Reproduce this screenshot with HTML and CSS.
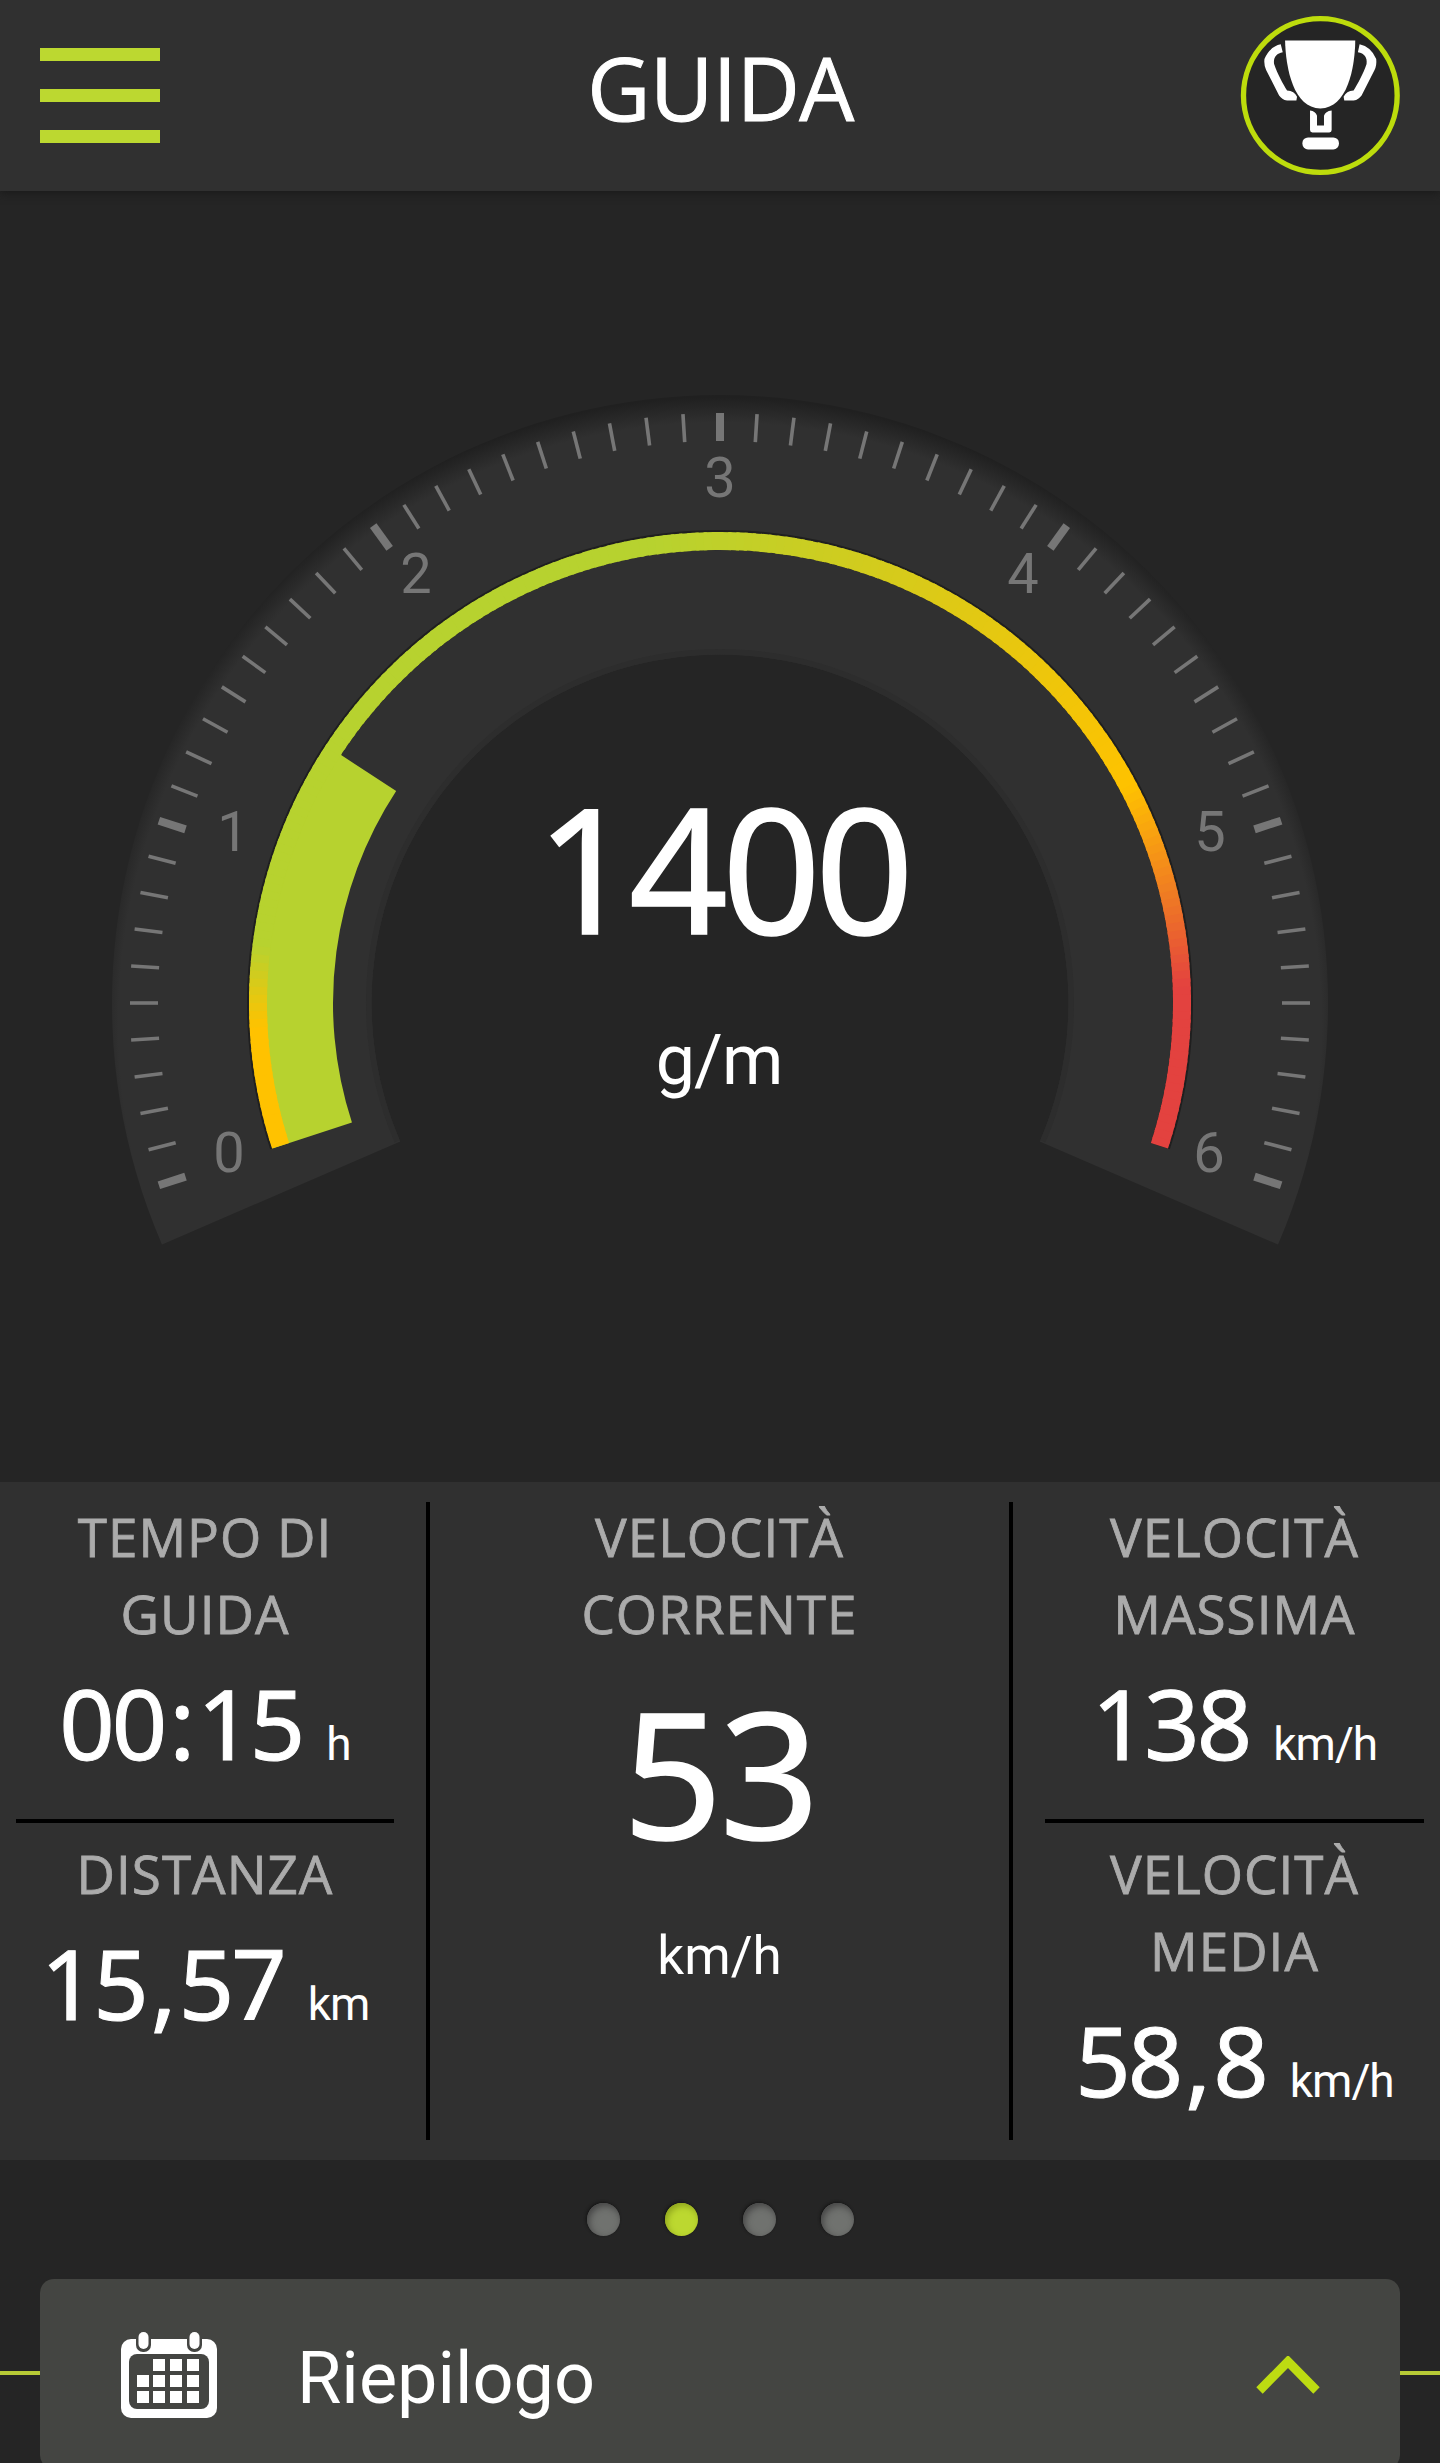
FILE: index.html
```html
<!DOCTYPE html>
<html lang="it">
<head>
  <meta charset="UTF-8" />
  <title>Guida</title>
  <link rel="stylesheet" href="styles.css">
</head>
<body>

  <header class="topbar">
    <div class="menu">
      <span></span>
      <span></span>
      <span></span>
    </div>
    <h1>GUIDA</h1>
    <svg class="trophy" viewBox="114 40 486 490">
      <circle cx="358" cy="285" r="231" fill="#252525" stroke="#bddc0c" stroke-width="16" />
      <path d="M252 120H463C462 205 438 324 358 324S254 205 252 120Z" fill="#fff" />
      <path d="M239 131L245 155C226 158 216 171 219 190C229 220 246 250 258 270Q280 271 288 289L286 300H258C247 299 240 293 234 285L195 208Q188 194 190 175Q206 138 239 131Z" fill="#fff" />
      <path d="M476 131L471 155C490 158 500 171 497 190C487 220 470 250 458 270Q436 271 428 289L430 300H458C469 299 476 293 482 285L521 208Q528 194 526 175Q510 138 476 131Z" fill="#fff" />
      <path d="M327 330Q344 332 348 346V375H369V346Q373 332 392 330V389Q392 396 385 396H334Q327 396 327 389Z" fill="#fff" />
      <rect x="304" y="411" width="110" height="36" rx="17" fill="#fff" />
    </svg>
  </header>

  <section class="gauge">
    <svg viewBox="0 191 1440 1291">
      <defs>
        <radialGradient id="ringFill" gradientUnits="userSpaceOnUse" cx="720" cy="1024" r="630">
          <stop offset="0.955" stop-color="#303030" />
          <stop offset="0.995" stop-color="#202020" />
        </radialGradient>
      </defs>
      <path id="ring" fill="url(#ringFill)" />
      <path id="ringEdge" fill="#2d2d2d" />
      <path id="arcShadow" fill="#1f1f1f" />
      <g id="ticks" stroke="#767676"></g>
      <path id="valueArc" fill="#b7d22f" />
      <g id="scale"></g>
      <g class="scale-labels">
        <text x="229" y="1172">0</text>
        <text x="233" y="851">1</text>
        <text x="416" y="593">2</text>
        <text x="720" y="497">3</text>
        <text x="1023" y="593">4</text>
        <text x="1210" y="851">5</text>
        <text x="1209" y="1172">6</text>
      </g>
      <text class="gauge-value" x="722" y="934">1400</text>
      <text class="gauge-unit" x="719" y="1084">g/m</text>
    </svg>
  </section>

  <section class="stats">
    <div class="column">
      <div class="stat first">
        <div class="label">TEMPO DI<br>GUIDA</div>
        <div class="value">00<i>:</i>15<small>h</small></div>
      </div>
      <div class="stat">
        <div class="label">DISTANZA</div>
        <div class="value">15<i>,</i>57<small>km</small></div>
      </div>
    </div>
    <div class="divider"></div>
    <div class="column">
      <div class="stat main">
        <div class="label">VELOCITÀ<br>CORRENTE</div>
        <div class="speed">53</div>
        <div class="speed-unit">km/h</div>
      </div>
    </div>
    <div class="divider"></div>
    <div class="column">
      <div class="stat first">
        <div class="label">VELOCITÀ<br>MASSIMA</div>
        <div class="value">138<small>km/h</small></div>
      </div>
      <div class="stat">
        <div class="label">VELOCITÀ<br>MEDIA</div>
        <div class="value">58<i>,</i>8<small>km/h</small></div>
      </div>
    </div>
  </section>

  <div class="dots">
    <span></span>
    <span class="active"></span>
    <span></span>
    <span></span>
  </div>

  <footer class="summary">
    <div class="line"></div>
    <div class="card">
      <svg class="calendar" viewBox="0 0 96 86">
        <rect x="0" y="7" width="96" height="79" rx="10" fill="#fff" />
        <rect x="8" y="22" width="80" height="55" rx="8" fill="#444542" />
        <rect x="15" y="-3" width="15" height="23" rx="7" fill="#444542" />
        <rect x="66" y="-3" width="15" height="23" rx="7" fill="#444542" />
        <rect x="17.500" y="0" width="10" height="17" rx="5" fill="#fff" />
        <rect x="68.500" y="0" width="10" height="17" rx="5" fill="#fff" />
        <path d="M32 27h12v12h-12zM49 27h12v12h-12zM66 27h12v12h-12zM16 43h12v12h-12zM32 43h12v12h-12zM49 43h12v12h-12zM66 43h12v12h-12zM16 59h12v12h-12zM32 59h12v12h-12zM49 59h12v12h-12zM66 59h12v12h-12z" fill="#fff" />
      </svg>
      <span class="title">Riepilogo</span>
      <svg class="chevron" viewBox="0 0 64 38">
        <path d="M3.500 34.500L32 5.500L60.500 34.500" fill="none" stroke="#bddc12" stroke-width="9" />
      </svg>
    </div>
    <div class="line"></div>
  </footer>

  <script>
    const cx = 720;
    const cy = 1003;

    // 0 degrees points up, clockwise is positive
    function point(radius, deg) {
      const a = deg * Math.PI / 180;
      return (cx + radius * Math.sin(a)).toFixed(2) + " " + (cy - radius * Math.cos(a)).toFixed(2);
    }

    function band(outer, inner, from, to) {
      const large = to - from > 180 ? 1 : 0;
      return `M${point(outer, from)}A${outer} ${outer} 0 ${large} 1 ${point(outer, to)}` +
        `L${point(inner, to)}A${inner} ${inner} 0 ${large} 0 ${point(inner, from)}Z`;
    }

    function draw(id, d) {
      document.getElementById(id).setAttribute("d", d);
    }

    function add(parent, name, attrs) {
      const el = document.createElementNS("http://www.w3.org/2000/svg", name);
      for (const key in attrs) el.setAttribute(key, attrs[key]);
      document.getElementById(parent).appendChild(el);
    }

    draw("ring", band(608, 348.5, -113.4, 113.4));
    draw("ringEdge", band(354, 348.5, -113.2, 113.2));
    draw("arcShadow", band(473, 453, -108, 108));
    draw("valueArc", band(470.5, 387, -108, -56.8));

    // Ticks
    for (let i = 0; i <= 60; i++) {
      const deg = -108 + i * 3.6;
      add("ticks", "path", {
        d: `M${point(590, deg)}L${point(562, deg)}`,
        "stroke-width": i % 10 === 0 ? 8 : 3.6
      });
    }

    // Colour scale
    const stops = [
      [-108, [255, 194, 0]],
      [-93, [255, 194, 0]],
      [-83, [183, 210, 47]],
      [-8, [183, 210, 47]],
      [62, [255, 194, 0]],
      [88, [227, 66, 63]],
      [108, [227, 66, 63]]
    ];

    function colorAt(deg) {
      let i = 0;
      while (i < stops.length - 2 && deg > stops[i + 1][0]) i++;
      const t = (deg - stops[i][0]) / (stops[i + 1][0] - stops[i][0]);
      const rgb = stops[i][1].map((c, k) => Math.round(c + (stops[i + 1][1][k] - c) * t));
      return `rgb(${rgb.join(",")})`;
    }

    for (let deg = -108; deg < 108; deg++) {
      add("scale", "path", {
        d: band(471, 453, deg, Math.min(deg + 1.4, 108)),
        fill: colorAt(deg + 0.5)
      });
    }
  </script>
</body>
</html>
```
FILE: styles.css
```css
* {
  box-sizing: border-box;
}

body {
  margin: 0;
  height: 2463px;
  overflow: hidden;
  background: #252525;
  color: #fff;
  font-family: Roboto, sans-serif;
}

.topbar {
  display: flex;
  align-items: center;
  justify-content: space-between;
  height: 191px;
  padding: 0 39px 0 40px;
  background: #303030;
  box-shadow: 0 2px 8px #1a1a1a;
}

.menu {
  width: 162px;
  display: flex;
  flex-direction: column;
  gap: 28px;
}

.menu span {
  width: 120px;
  height: 13px;
  background: #bcd830;
}

h1 {
  margin: 0;
  padding-bottom: 17px;
  font-family: "Open Sans", sans-serif;
  font-size: 87px;
  line-height: 100px;
  font-weight: 400;
  letter-spacing: -0.5px;
  -webkit-text-stroke: 1px #fff;
}

.trophy {
  width: 162px;
  height: 163px;
}

.gauge {
  height: 1291px;
}

.gauge svg {
  display: block;
  width: 1440px;
  height: 1291px;
}

.gauge text {
  text-anchor: middle;
  fill: #fff;
}

.gauge .scale-labels text {
  font-size: 56px;
  fill: #767676;
}

.gauge .gauge-value {
  font-family: "Noto Sans", sans-serif;
  font-size: 173px;
  letter-spacing: -6px;
  stroke: #fff;
  stroke-width: 1.5px;
}

.gauge .gauge-unit {
  font-size: 70px;
  letter-spacing: -1px;
}

/* Stats */
.stats {
  display: grid;
  grid-template-columns: 410px 36px 547px 36px 411px;
  height: 678px;
  padding: 20px 0;
  background: #303030;
  text-align: center;
}

.divider {
  width: 4px;
  margin-left: 16px;
  background: #000;
}

.column {
  padding: 0 16px;
}

.stat {
  padding-top: 12px;
}

.stat.first {
  height: 325px;
  margin-top: -4px;
  padding-top: 0;
  border-bottom: 4px solid #000;
}

.stat.main {
  margin-top: -4px;
  padding-top: 0;
}

.label {
  font-family: "Open Sans", sans-serif;
  font-size: 53px;
  line-height: 77px;
  letter-spacing: 1px;
  color: #ababab;
  -webkit-text-stroke: 0.8px #ababab;
}

.value {
  font-family: "Noto Sans", sans-serif;
  font-size: 97px;
  line-height: 110px;
  margin-top: 15px;
  white-space: nowrap;
  letter-spacing: -3px;
  -webkit-text-stroke: 1px #fff;
}

.value i {
  font-style: normal;
  margin: 0 5px;
}

.value small {
  font-family: Roboto, sans-serif;
  font-size: 46px;
  margin-left: 24px;
  letter-spacing: -1px;
  -webkit-text-stroke: 0;
}

.speed {
  font-family: "Noto Sans", sans-serif;
  font-size: 175px;
  line-height: 200px;
  margin-top: 19px;
  letter-spacing: -3px;
  -webkit-text-stroke: 1.5px #fff;
}

.speed-unit {
  font-size: 53px;
  line-height: 60px;
  margin-top: 55px;
}

/* Page dots */
.dots {
  display: flex;
  justify-content: center;
  align-items: center;
  gap: 45px;
  height: 119px;
}

.dots span {
  width: 33px;
  height: 33px;
  border-radius: 50%;
  background: #70726f;
  box-shadow: inset 2px 3px 7px #444, -1px -1px 3px #151515;
}

.dots .active {
  background: #bcd830;
  box-shadow: inset 2px 3px 6px #8fa41d, -1px -1px 3px #151515;
}

/* Bottom card */
.summary {
  display: flex;
}

.line {
  width: 40px;
  height: 4px;
  margin-top: 92px;
  background: #b7ca36;
}

.card {
  flex: 1;
  display: flex;
  align-items: center;
  height: 190px;
  padding: 2px 80px 0 81px;
  border-radius: 14px;
  background: #444542;
}

.calendar {
  width: 96px;
  height: 86px;
}

.title {
  flex: 1;
  margin-left: 80px;
  padding-top: 8px;
  font-size: 72px;
  line-height: 84px;
}

.chevron {
  width: 64px;
  height: 38px;
}
```
